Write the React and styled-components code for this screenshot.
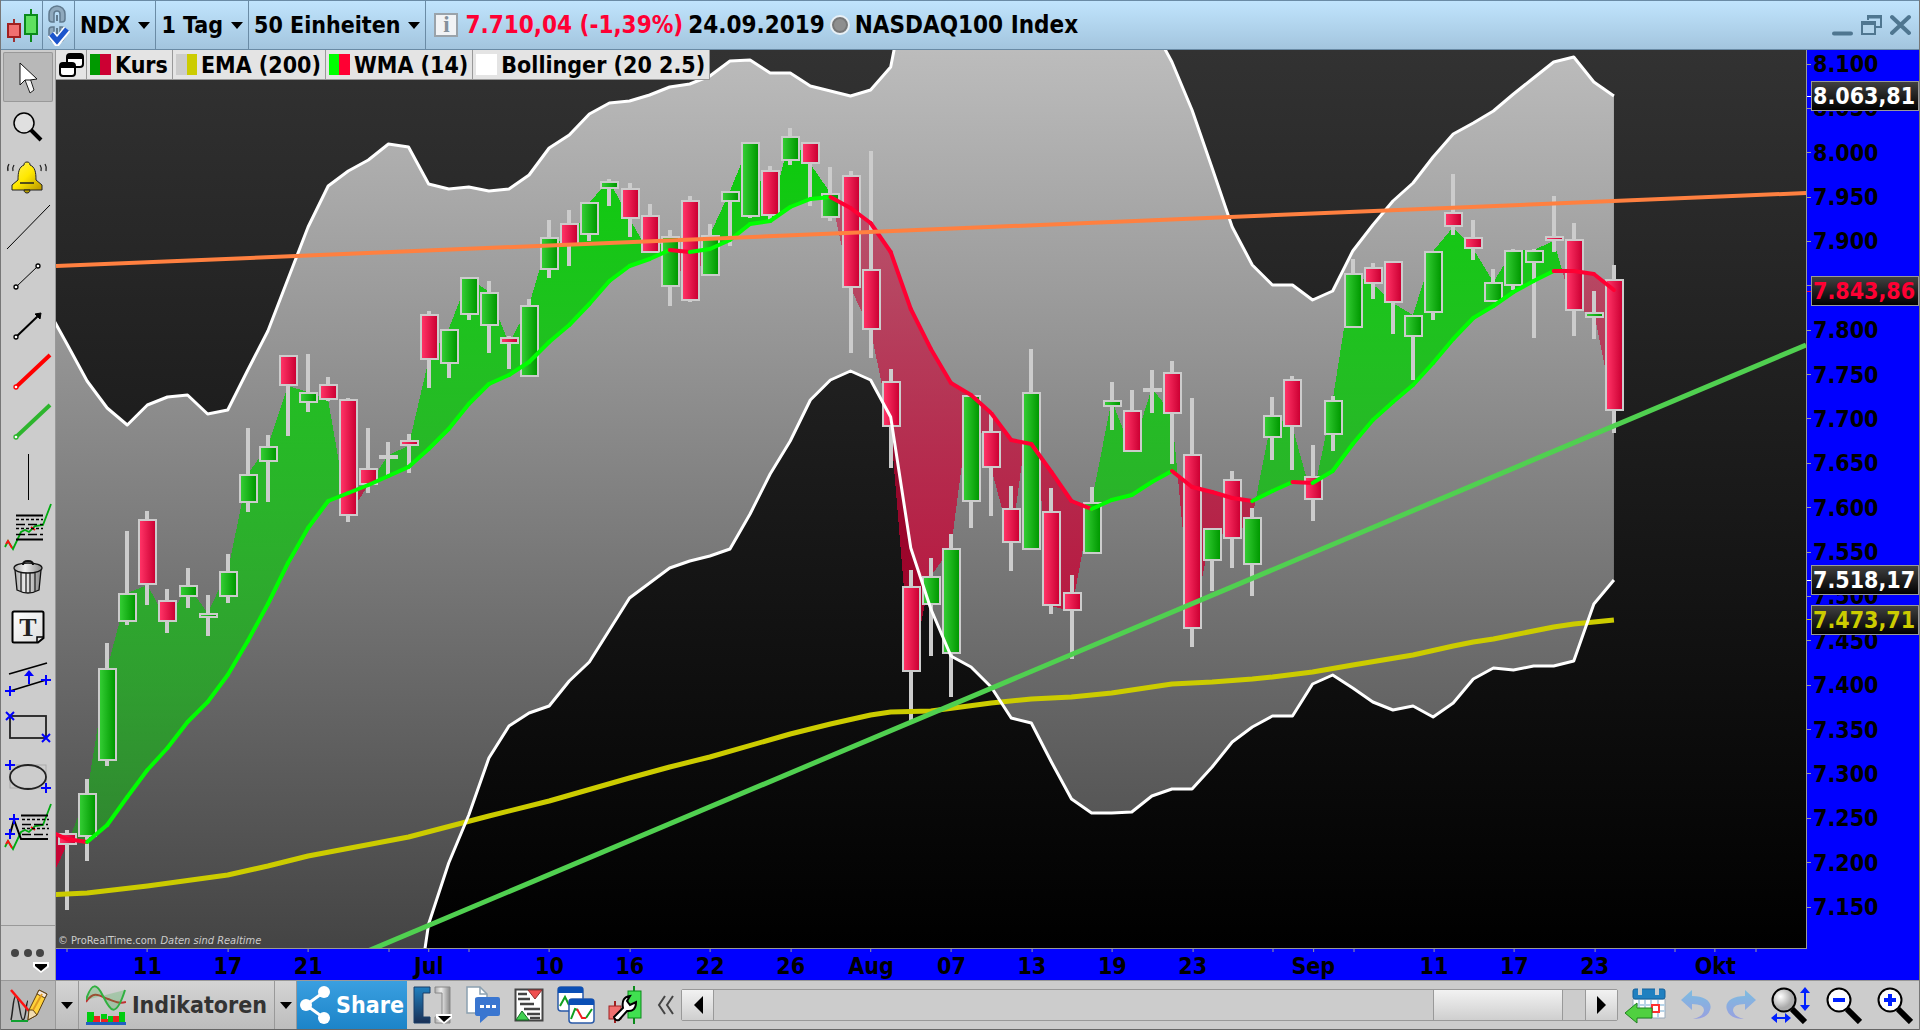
import React from "react";
import styled, { createGlobalStyle, css } from "styled-components";

const Global = createGlobalStyle`
  *, *::before, *::after { box-sizing: border-box; }
  html, body, #root { height: 100%; margin: 0; }
  body { overflow: hidden; background: #cccccc; }
  button, select { font: inherit; color: inherit; }
`;

/* ---------- market data, in plot units ---------- */

const STEP = 20.09;
const FIRST = 67;
const LEFT = 56;
const TOP = 50;
const WIDTH = 1750;
const HEIGHT = 898;
const xAt = (i) => FIRST + STEP * i;
const yAt = (price) => 64 + (8100 - price) * 0.8864;

// [high, body top, body bottom, low, rising]
const candles = [
  [830, 833, 845, 910, 0], [779, 793, 837, 861, 1], [643, 668, 761, 766, 1], [531, 593, 622, 625, 1],
  [511, 519, 585, 605, 0], [589, 600, 622, 633, 0], [568, 585, 597, 608, 1], [595, 613, 618, 636, 1],
  [554, 571, 597, 603, 1], [428, 474, 503, 512, 1], [435, 446, 462, 502, 1], [355, 355, 386, 436, 0],
  [354, 392, 403, 412, 1], [377, 384, 400, 401, 0], [398, 399, 516, 522, 0], [428, 468, 485, 493, 0],
  [442, 455, 459, 475, 1], [434, 440, 446, 473, 0], [311, 314, 360, 388, 0], [329, 329, 364, 378, 1],
  [277, 277, 315, 320, 1], [281, 292, 326, 353, 1], [336, 337, 344, 369, 0], [299, 305, 377, 377, 1],
  [220, 237, 270, 278, 1], [210, 223, 245, 266, 0], [202, 202, 235, 241, 1], [179, 181, 189, 206, 1],
  [183, 188, 219, 237, 0], [204, 215, 253, 253, 0], [230, 236, 287, 306, 1], [196, 200, 301, 302, 0],
  [224, 235, 276, 276, 1], [191, 191, 202, 246, 1], [142, 142, 217, 218, 1], [166, 170, 216, 220, 0],
  [128, 136, 161, 165, 1], [142, 142, 164, 206, 0], [167, 193, 218, 221, 1], [171, 175, 288, 353, 0],
  [151, 269, 330, 358, 0], [369, 381, 427, 468, 0], [570, 586, 672, 721, 0], [558, 576, 605, 656, 1],
  [534, 548, 654, 697, 1], [395, 395, 502, 528, 1], [411, 431, 468, 516, 0], [486, 508, 543, 571, 0],
  [349, 392, 550, 550, 1], [488, 511, 606, 614, 0], [575, 592, 611, 659, 0], [487, 502, 554, 554, 1],
  [382, 400, 407, 430, 1], [390, 410, 452, 452, 0], [370, 388, 392, 413, 1], [361, 372, 414, 464, 0],
  [398, 454, 629, 647, 0], [528, 528, 561, 591, 1], [471, 479, 539, 568, 0], [508, 517, 565, 596, 1],
  [397, 415, 438, 460, 1], [376, 379, 427, 470, 0], [445, 476, 500, 521, 0], [396, 400, 435, 451, 1],
  [259, 273, 328, 328, 1], [263, 267, 284, 299, 0], [261, 261, 303, 334, 0], [315, 315, 337, 380, 1],
  [251, 251, 313, 320, 1], [174, 212, 227, 235, 0], [220, 237, 249, 260, 0], [269, 282, 302, 302, 1],
  [249, 250, 286, 290, 1], [249, 250, 263, 338, 1], [196, 236, 241, 252, 0], [223, 239, 311, 336, 0],
  [291, 312, 318, 339, 1], [265, 279, 411, 433, 0],
];

const wma = [
  839, 842, 825, 797, 770, 748, 722, 702, 675, 641, 604, 563, 528, 501, 493, 485, 476, 467, 449, 429,
  404, 384, 375, 362, 342, 325, 304, 281, 266, 259, 250, 252, 249, 240, 224, 221, 207, 199, 197, 208,
  223, 252, 309, 349, 383, 395, 413, 440, 444, 472, 501, 509, 500, 495, 482, 471, 487, 492, 498, 501,
  491, 482, 483, 471, 444, 420, 402, 385, 363, 339, 318, 306, 292, 281, 271, 271, 274, 290,
];

const upperBand = [
  344, 381, 408, 425, 405, 397, 395, 414, 410, 370, 331, 279, 227, 186, 171, 160, 144, 147, 184, 189,
  187, 191, 189, 175, 148, 135, 114, 103, 101, 95, 87, 84, 76, 61, 60, 73, 73, 86, 91, 96,
  90, 67, -35, -60, -70, -80, -80, -80, -80, -80, -80, -80, -50, -20, 25, 62, 110, 168, 227, 265,
  285, 285, 300, 291, 251, 225, 201, 183, 157, 134, 123, 111, 94, 78, 62, 57, 82, 96,
];

const lowerBand = [
  924, 863, 815, 758, 726, 713, 706, 681, 662, 630, 598, 583, 568, 561, 556, 549, 514, 474, 441, 400,
  380, 371, 380, 417, 548, 609, 656, 667, 687, 718, 723, 762, 799, 813, 813, 812, 796, 789, 789, 767,
  742, 727, 716, 716, 684, 675, 688, 702, 710, 706, 717, 703, 679, 668, 670, 666, 666, 661, 604, 580,
];
const LOWER_START = 18;

const ema = [
  [-1, 895], [1, 893], [4, 886], [8, 875], [10, 866], [12, 856], [17, 837], [21, 816], [24, 801], [28, 778],
  [30, 767], [32, 757], [36, 734], [38, 724], [40, 715], [41, 712], [43, 711], [46, 703], [48, 699],
  [50, 697], [52, 693], [55, 684], [57, 682], [59, 679], [60, 677], [62, 672], [64, 665], [67, 655],
  [69, 646], [70, 642], [71, 639], [74, 627], [75, 624], [77, 620],
];

const closes = candles.map(([, top, bottom, , up]) => (up ? top : bottom));

/* Splits the area between close and average wherever the two lines cross. */
const cloud = (() => {
  const pts = [{ x: xAt(-1), c: 887, w: 830 }, ...closes.map((c, i) => ({ x: xAt(i), c, w: wma[i] }))];
  const up = [];
  const down = [];
  for (let i = 1; i < pts.length; i++) {
    const a = pts[i - 1];
    const b = pts[i];
    const da = a.w - a.c;
    const db = b.w - b.c;
    if (da * db >= 0) {
      (da + db >= 0 ? up : down).push(`M${a.x} ${a.c}L${b.x} ${b.c}L${b.x} ${b.w}L${a.x} ${a.w}Z`);
    } else {
      const t = da / (da - db);
      const mx = a.x + (b.x - a.x) * t;
      const my = a.c + (b.c - a.c) * t;
      (da > 0 ? up : down).push(`M${a.x} ${a.c}L${mx} ${my}L${a.x} ${a.w}Z`);
      (db > 0 ? up : down).push(`M${mx} ${my}L${b.x} ${b.c}L${b.x} ${b.w}Z`);
    }
  }
  return { up: up.join(""), down: down.join("") };
})();

const upperPts = [[47, 308], ...upperBand.map((y, i) => [xAt(i), y])];
const lowerPts = [[xAt(17), 1060], ...lowerBand.map((y, i) => [xAt(i + LOWER_START), y])];
const toPoints = (pts) => pts.map((p) => p.join(",")).join(" ");
const bandArea = toPoints([...upperPts, ...[...lowerPts].reverse(), [47, 1060]]);

const priceTicks = Array.from({ length: 20 }, (_, i) => 8100 - 50 * i);
const priceTags = [
  { price: 8063.81, color: "#ffffff" },
  { price: 7843.86, color: "#ff0033" },
  { price: 7518.17, color: "#ffffff" },
  { price: 7473.71, color: "#cccc00" },
];
const timeTicks = [
  [0], [4, "11"], [8, "17"], [12, "21"], [16], [18, "Jul"], [20], [24, "10"], [28, "16"], [32, "22"],
  [36, "26"], [40, "Aug"], [44, "07"], [48, "13"], [52, "19"], [56, "23"], [60], [62, "Sep"], [64],
  [68, "11"], [72, "17"], [76, "23"], [80], [82, "Okt"], [84],
];
const formatPrice = (v, digits) => {
  const [whole, cents] = v.toFixed(digits).split(".");
  const grouped = `${whole.slice(0, 1)}.${whole.slice(1)}`;
  return cents ? `${grouped},${cents}` : grouped;
};

/* ---------- styles ---------- */

const Window = styled.div`
  display: grid;
  grid-template-rows: 50px minmax(0, 1fr) 50px;
  height: 100vh;
  border-right: 1px solid #777777;
  border-left: 1px solid #777777;
  font: bold 23px/28px "DejaVu Sans Condensed", "Noto Sans", sans-serif;
  color: #000000;
`;

const Header = styled.header`
  display: flex;
  align-items: stretch;
  border-top: 1px solid #6a8ba5;
  border-bottom: 1px solid #6a8ba5;
  background: linear-gradient(#c0e4fd, #a3c5de);
  white-space: nowrap;
`;

const HeaderButton = styled.button`
  display: flex;
  align-items: center;
  justify-content: center;
  width: ${(p) => p.$width}px;
  padding: 0;
  border: 0;
  border-right: 1px solid #6a8ba5;
  background: none;
`;

const Picker = styled.label`
  display: flex;
  align-items: center;
  gap: 8px;
  padding: 0 5px;
  border-right: 1px solid #6a8ba5;
`;

const PickerSelect = styled.select`
  appearance: none;
  field-sizing: content;
  padding: 0;
  border: 0;
  background: none;
  font: inherit;
  outline: 0;
`;

const Quote = styled.div`
  display: flex;
  flex: 1;
  align-items: center;
  gap: 5px;
  padding-left: 8px;
  font-size: 24px;
`;

const Change = styled.span`
  color: #ff0033;
`;

const StatusDot = styled.span`
  flex: none;
  width: 20px;
  height: 20px;
  border: 2px solid #e8f0f6;
  border-radius: 50%;
  background: #8e8e8e;
  box-shadow: inset 0 0 0 2px #777777;
`;

const InfoButton = styled.button`
  width: 24px;
  height: 24px;
  margin-right: 2px;
  padding: 0;
  border: 2px solid #9aa3aa;
  background: #f1f3f5;
  color: #84919b;
  font: bold 23px/20px "Liberation Serif", serif;
`;

const WindowControls = styled.div`
  display: flex;
  align-items: center;
  gap: 8px;
  padding-right: 8px;
`;

const PlainButton = styled.button`
  display: flex;
  align-items: center;
  justify-content: center;
  padding: 0;
  border: 0;
  background: none;
`;

const Body = styled.div`
  display: grid;
  grid-template-columns: 55px minmax(0, 1fr);
  min-height: 0;
`;

const Sidebar = styled.nav`
  display: flex;
  flex-direction: column;
  padding-top: 2px;
  border-right: 1px solid #999999;
  background: #cccccc;
`;

const Tool = styled.button`
  display: flex;
  width: 50px;
  height: 50px;
  margin-left: 2px;
  padding: 0;
  border: 0;
  background: none;
  ${(p) =>
    p.$active &&
    css`
      background: #b8b8b8;
      box-shadow: inset 0 0 0 1px #999999;
      border-radius: 2px;
    `}
`;

const MoreTools = styled.button`
  display: flex;
  height: 55px;
  margin-top: auto;
  padding: 0 0 0 2px;
  border: 0;
  border-top: 1px solid #999999;
  background: none;
`;

const ChartGrid = styled.main`
  display: grid;
  grid-template-columns: minmax(0, 1fr) 112px;
  grid-template-rows: minmax(0, 1fr) 31px;
  background: #0000ff;
`;

const Plot = styled.section`
  position: relative;
  min-height: 0;
  border-right: 1px solid #999999;
  border-bottom: 1px solid #999999;
  overflow: hidden;
`;

const PlotSvg = styled.svg`
  display: block;
  width: 100%;
  height: 100%;
`;

const Legend = styled.div`
  position: absolute;
  top: 0;
  left: 0;
  display: flex;
  height: 30px;
  border-bottom: 1px solid #999999;
  background: #e4e4e4;
  line-height: 30px;
  white-space: nowrap;
`;

const LegendItem = styled.button`
  display: flex;
  align-items: center;
  gap: 4px;
  padding: 0 4px 0 3px;
  border: 0;
  border-right: 1px solid #999999;
  background: none;
`;

const LegendMenu = styled(LegendItem)`
  padding: 0 2px;
`;

const Swatch = styled.span`
  width: 21px;
  height: 21px;
  background: linear-gradient(90deg, ${(p) => p.$from} 50%, ${(p) => p.$to} 50%);
`;

const Copyright = styled.p`
  position: absolute;
  bottom: 0;
  left: 2px;
  display: flex;
  gap: 4px;
  margin: 0;
  color: #cccccc;
  font-size: 11px;
  line-height: 14px;
  font-weight: normal;
`;

const PriceAxis = styled.aside`
  position: relative;
  overflow: hidden;
`;

const PriceTick = styled.span`
  position: absolute;
  left: 0;
  display: flex;
  align-items: center;
  gap: 2px;
  height: 28px;
  transform: translateY(-50%);
  &::before {
    content: "";
    width: 4px;
    height: 1px;
    background: #999999;
  }
`;

const PriceTag = styled(PriceTick)`
  right: 0;
  gap: 0;
  color: ${(p) => p.$color};
  &::before {
    background: ${(p) => p.$color};
  }
`;

const TagBox = styled.span`
  flex: 1;
  height: 30px;
  padding-left: 1px;
  border: 1px solid #999999;
  background: linear-gradient(#404040, #000000);
`;

const TimeAxis = styled.aside`
  position: relative;
`;

const TimeTick = styled.span`
  position: absolute;
  top: 0;
  display: flex;
  flex-direction: column;
  align-items: center;
  transform: translateX(-50%);
  line-height: 34px;
  &::before {
    content: "";
    width: 1px;
    height: 3px;
    margin-bottom: -3px;
    background: #999999;
  }
`;

const Footer = styled.footer`
  display: flex;
  align-items: stretch;
  border-top: 1px solid #999999;
  border-bottom: 1px solid #666666;
  background: #cccccc;
  white-space: nowrap;
`;

const FooterButton = styled.button`
  display: flex;
  flex: none;
  align-items: center;
  justify-content: center;
  gap: 6px;
  width: ${(p) => p.$width}px;
  padding: 0;
  border: 0;
  border-right: 1px solid #999999;
  background: ${(p) => (p.$pressed ? "#b8b8b8" : "linear-gradient(#d4d4d4, #bdbdbd)")};
  color: #333333;
`;

const ShareButton = styled(FooterButton)`
  border-right: 0;
  background: linear-gradient(#3a9fe0, #1c84c8);
  color: #ffffff;
`;

const IconRow = styled.div`
  display: flex;
  align-items: center;
  gap: ${(p) => p.$gap}px;
  padding: 0 6px;
`;

const ScrollBar = styled.div`
  display: flex;
  flex: 1;
  align-self: center;
  height: 32px;
  border: 1px solid #999999;
  border-radius: 2px;
`;

const ScrollButton = styled.button`
  display: flex;
  align-items: center;
  justify-content: center;
  width: 31px;
  padding: 0;
  border: 0;
  background: linear-gradient(#f2f2f2, #cfcfcf);
`;

const ScrollTrack = styled.div`
  display: grid;
  flex: 1;
  grid-template-columns: 717fr 130fr 22fr;
  border: solid #999999;
  border-width: 0 1px;
`;

const ScrollThumb = styled.div`
  grid-column: 2;
  border: solid #999999;
  border-width: 0 1px;
  background: linear-gradient(#f2f2f2, #cfcfcf);
`;

/* ---------- icons ---------- */

const Icon = ({ w, h, children, ...rest }) => (
  <svg width={w} height={h} viewBox={`0 0 ${w} ${h}`} fill="none" aria-hidden="true" {...rest}>
    {children}
  </svg>
);

const Caret = () => (
  <Icon w={12} h={8}>
    <path d="M0 1H12L6 8Z" fill="#000" />
  </Icon>
);

const CandleIcon = () => (
  <Icon w={34} h={34}>
    <path d="M9 11V34" stroke="#a03030" strokeWidth="2" />
    <path d="M26 1V34" stroke="#0a8a1a" strokeWidth="2" />
    <rect x="3" y="16" width="12" height="13" fill="#f07070" stroke="#a02020" strokeWidth="2" />
    <rect x="20" y="7" width="12" height="19" fill="#5fe05f" stroke="#0a8a1a" strokeWidth="2" />
  </Icon>
);

const LinkIcon = () => (
  <Icon w={24} h={42}>
    <path d="M2 15V10a8 8 0 0 1 16 0v5q0 3-3 3h-2V10a3 3 0 0 0-6 0v8H5q-3 0-3-3Z" fill="#8fa9bd" stroke="#607a8e" strokeWidth="1.500" />
    <path d="M2 26V31a8 8 0 0 0 16 0v-5q0-3-3-3h-2V31a3 3 0 0 1-6 0v-8H5q-3 0-3 3Z" fill="#8fa9bd" stroke="#607a8e" strokeWidth="1.500" />
    <path d="M10 11v6M10 24v6" stroke="#607a8e" strokeWidth="2" />
    <path d="M4 30l6 8L20 25" stroke="#fff" strokeWidth="8" />
    <path d="M4 30l6 7L20 25" stroke="#1c55cc" strokeWidth="5" />
  </Icon>
);

const Plus = ({ x, y }) => <path d={`M${x - 5} ${y}h10M${x} ${y - 5}v10`} stroke="#0000ff" strokeWidth="2" />;
const Cross = ({ x, y }) => (
  <path d={`M${x - 4} ${y - 4}l8 8M${x + 4} ${y - 4}l-8 8`} stroke="#0000ff" strokeWidth="2" />
);
const Handle = ({ x, y, color = "#000" }) => <circle cx={x} cy={y} r="2" fill="#fff" stroke={color} strokeWidth="1.300" />;

const Squiggle = () => (
  <>
    <path d="M2 45L5 39L10 47L18 30L22 28L26 30L32 24L40 23L48 2" stroke="#00aa10" strokeWidth="1.800" />
    <path d="M3 42L5 39L9 46M28 25L32 28" stroke="#ff1010" strokeWidth="1.800" />
  </>
);

const toolIcons = [
  ["Zeiger", <>
    <path d="M22 28L27 26L31 38L27 41Z" fill="#f4f4f4" stroke="#222" />
    <path d="M17 11L17 33L22 28L27 28L34 27Z" fill="#fff" stroke="#111" />
  </>],
  ["Lupe", <>
    <path d="M28 28L38 38" stroke="#000" strokeWidth="4" />
    <circle cx="21" cy="21" r="10" fill="#e0e0e0" stroke="#000" strokeWidth="1.500" />
  </>],
  ["Alarm", <>
    <path d="M24 10c2 0 3 1 3 3c5 2 6 7 6 15l6 5v5H9v-5l6-5c0-8 1-13 6-15c0-2 1-3 3-3Z" fill="url(#bell)" stroke="#222" />
    <path d="M21 38c0 4 6 4 6 0Z" fill="#b89f00" stroke="#222" />
    <path d="M17 31h14M6 12q-2 3-1 7M11 13q-2 3-1 6M42 12q2 3 1 7M37 13q2 3 1 6" stroke="#222" strokeWidth="1.300" />
  </>],
  ["Gerade", <path d="M4 47L47 3" stroke="#000" />],
  ["Strecke", <><path d="M13 35L35 14" stroke="#000" /><Handle x={13} y={35} /><Handle x={35} y={14} /></>],
  ["Pfeil", <>
    <path d="M13 35L36 13" stroke="#000" strokeWidth="2" />
    <path d="M38 11L32 12L37 17Z" fill="#000" stroke="#000" />
    <Handle x={13} y={35} />
  </>],
  ["Rote Linie", <><path d="M13 35L47 3" stroke="#ff0000" strokeWidth="4" /><Handle x={13} y={35} color="#f00" /></>],
  ["Grüne Linie", <><path d="M13 35L47 3" stroke="#2db52d" strokeWidth="4" /><Handle x={13} y={35} color="#2db52d" /></>],
  ["Vertikale", <path d="M25.500 2V48" stroke="#000" />],
  ["Retracement", <>
    <Squiggle />
    <path d="M13 13.500H40M13 37.500H40" stroke="#000" strokeWidth="2" />
    <path d="M13 17.500h27M13 26.500h27" stroke="#000" strokeWidth="1.500" strokeDasharray="3 2" />
    <path d="M13 22.500h27M13 32.500h27" stroke="#000" strokeWidth="1.500" strokeDasharray="9 3" />
  </>],
  ["Löschen", <>
    <path d="M12 18L14 38Q25 44 36 38L38 18Z" fill="url(#metal)" stroke="#111" strokeWidth="1.300" />
    <path d="M18 21V40M23 21V41M27 21V41M32 21V40" stroke="#222" strokeWidth="1.300" />
    <ellipse cx="25" cy="16" rx="14" ry="5" fill="url(#metal)" stroke="#111" strokeWidth="1.300" />
    <path d="M20 13q0-4 5-4t5 4" stroke="#111" strokeWidth="2" />
  </>],
  ["Text", <>
    <path d="M11 9.500H39Q40.500 9.500 40.500 11V36L35 40.500H11Q9.500 40.500 9.500 39V11Q9.500 9.500 11 9.500Z" fill="url(#paper)" stroke="#000" strokeWidth="2" />
    <path d="M34 40V35H40" stroke="#000" strokeWidth="1.500" />
    <text x="25" y="34" textAnchor="middle" fill="#222" fontSize="26" fontWeight="bold" fontFamily="Liberation Serif, serif">T</text>
  </>],
  ["Kanal", <>
    <path d="M6 22L44 11M7 39L43 28" stroke="#000" strokeWidth="1.800" />
    <path d="M26 32V22" stroke="#0000ff" strokeWidth="2" />
    <path d="M21 24L26 18L31 24Z" fill="#0000ff" />
    <Plus x={7} y={39} /><Plus x={43} y={28} />
  </>],
  ["Rechteck", <>
    <rect x="7" y="14" width="36" height="22" stroke="#222" strokeWidth="1.800" />
    <Cross x={7} y={14} /><Cross x={43} y={36} />
  </>],
  ["Ellipse", <>
    <rect x="7" y="13" width="36" height="23" stroke="#aaaaaa" />
    <ellipse cx="25" cy="25" rx="18" ry="12" stroke="#222" strokeWidth="1.800" />
    <Plus x={7} y={13} /><Plus x={43} y={36} />
  </>],
  ["Projektion", <>
    <Squiggle />
    <path d="M7 32L11 18L18 37H45M18 13.500H45" stroke="#000" strokeWidth="2" />
    <path d="M19 17.500h27M19 26.500h27" stroke="#000" strokeWidth="1.500" strokeDasharray="3 2" />
    <path d="M19 22.500h26M19 32.500h26" stroke="#000" strokeWidth="1.500" strokeDasharray="9 3" />
    <Plus x={11} y={17} /><Plus x={7} y={32} />
  </>],
];

const Pencil = () => (
  <Icon w={40} h={36}>
    <path d="M3 33C5 25 5 9 8 9S12 33 15 33S18 14 20 14" stroke="#222" strokeWidth="1.500" />
    <path d="M3 3L21 24" stroke="#ff1010" strokeWidth="2.500" />
    <path d="M3 34H20" stroke="#10a030" strokeWidth="2" />
    <path d="M20 33L21 23L31 3L39 7L29 28Z" fill="#ffd23a" stroke="#5c3d10" />
    <path d="M20 33L21 23L25 23L29 28Z" fill="#f2dcb0" stroke="#5c3d10" />
    <path d="M31 3L39 7L37 11L29 7Z" fill="#f5e8dc" stroke="#5c3d10" />
    <path d="M25 23L34 7" stroke="#e09a20" strokeWidth="2" />
  </Icon>
);

const IndicatorIcon = () => (
  <Icon w={40} h={42}>
    <path d="M0 18C8 6 14 12 22 15S34 20 40 18" stroke="#c03030" strokeWidth="2" />
    <path d="M0 16C6 -3 11 0 17 12S29 38 39 6" fill="#30b040" fillOpacity="0.250" stroke="#30b040" strokeWidth="2" />
    <path d="M1 28H8V32H14V36H1ZM15 30H21V35H15ZM33 28H39V38H33ZM22 32H27V38H22Z" fill="#00cc10" />
    <path d="M8 32H14V38H8ZM27 32H33V38H27ZM15 35H22V38H15ZM1 36H8V38H1Z" fill="#ee2020" />
    <path d="M1 28H7V38H1Z" fill="#00cc10" />
    <path d="M0 39.500H40" stroke="#2060c0" strokeWidth="3" />
  </Icon>
);

const ShareIcon = () => (
  <Icon w={30} h={42}>
    <path d="M24 8L6 21L24 34" stroke="#fff" strokeWidth="3" />
    <circle cx="6" cy="21" r="6" fill="#fff" />
    <circle cx="24" cy="8" r="6" fill="#fff" />
    <circle cx="24" cy="34" r="6" fill="#fff" />
  </Icon>
);

const BracketsIcon = () => (
  <Icon w={40} h={38}>
    <path d="M1 1H17V7H10V31H17V37H1Z" fill="url(#blue)" stroke="#1b3f68" />
    <path d="M22 1H37V37H22V31H29V7H22Z" fill="url(#metal)" stroke="#888" />
    <path d="M23 28H39V32L31 38L23 32Z" fill="#fff" />
    <path d="M25 30H38L31 36Z" fill="#000" />
  </Icon>
);

const DocChatIcon = () => (
  <Icon w={35} h={38}>
    <path d="M1 1H14L21 8V27H1Z" fill="#fff" stroke="#8ba0b0" strokeWidth="1.500" />
    <path d="M14 1V8H21" stroke="#8ba0b0" strokeWidth="1.500" />
    <path d="M12 11H32Q34 11 34 13V28Q34 30 32 30H22L14 37L14 30H12Q9 30 9 28V13Q9 11 12 11Z" fill="#3a76d0" />
    <path d="M14 19h4v3h-4zM20 19h4v3h-4zM26 19h4v3h-4z" fill="#fff" />
  </Icon>
);

const ReportIcon = () => (
  <Icon w={30} h={34}>
    <rect x="1.500" y="1.500" width="27" height="31" fill="#fff" stroke="#444" strokeWidth="2" />
    <path d="M4 6H13M4 11H16M6 16H20M10 21H26M13 26H26M16 30H26" stroke="#444" strokeWidth="2.500" />
    <path d="M14 2H28L21 11Z" fill="#f05050" stroke="#903030" />
    <path d="M2 32H15L8 23Z" fill="#40d050" stroke="#107020" />
  </Icon>
);

const ChartsIcon = () => (
  <Icon w={38} h={38}>
    <rect x="1" y="1" width="25" height="24" rx="3" fill="#fff" stroke="#2a5aa8" strokeWidth="1.500" />
    <path d="M1 3Q1 1 3 1H24Q26 1 26 3V7H1Z" fill="#0a4fb5" />
    <path d="M3 20L8 11L12 19" stroke="#10a020" strokeWidth="2" />
    <rect x="12" y="13" width="25" height="24" rx="3" fill="#fff" stroke="#2a5aa8" strokeWidth="1.500" />
    <path d="M12 15Q12 13 14 13H35Q37 13 37 15V19H12Z" fill="#0a4fb5" />
    <path d="M14 33L18 23L21 24M29 32L35 23" stroke="#10a020" strokeWidth="2" />
    <path d="M20 23L25 32L29 32" stroke="#ee2020" strokeWidth="2" />
  </Icon>
);

const WrenchIcon = () => (
  <Icon w={36} h={38}>
    <path d="M7 15V37" stroke="#a02020" strokeWidth="2" />
    <rect x="1" y="20" width="12" height="13" fill="#f07070" stroke="#a02020" />
    <path d="M26 0V38" stroke="#0a8a1a" strokeWidth="2" />
    <rect x="20" y="5" width="13" height="27" fill="#40e050" stroke="#0a8a1a" />
    <path d="M6 31L15 22Q13 11 22 10L19 15L22 19L28 16Q28 26 19 25L11 34Q7 35 6 31Z" fill="#fff" stroke="#000" strokeWidth="2" />
  </Icon>
);

const CalendarIcon = () => (
  <Icon w={42} h={40}>
    <path d="M9 14H41V33H9Z" fill="#fff" stroke="#9ab" />
    <path d="M9 20H41M9 26H41M15 14V33M21 14V33M27 14V33M34 14V33" stroke="#b8d4e8" strokeWidth="2" />
    <rect x="9" y="4" width="32" height="10" rx="2" fill="#2080c0" stroke="#14609a" />
    <path d="M16 1V10M33 1V10" stroke="#c8ccd0" strokeWidth="4" />
    <rect x="28" y="20" width="7" height="7" fill="#fff" stroke="#ff3030" strokeWidth="2" />
    <path d="M1 28L13 18V23H28V33H13V38Z" fill="#50d040" stroke="#208020" />
  </Icon>
);

const UndoIcon = ({ flip }) => (
  <Icon w={30} h={30}>
    <path
      d="M0 10L11 0V6C24 6 32 12 29 20Q26 29 12 29Q23 26 23 20Q23 14 11 14V20Z"
      fill="url(#undo)"
      transform={flip ? "translate(30 0) scale(-1 1)" : undefined}
    />
  </Icon>
);

const LensIcon = ({ mode }) => (
  <Icon w={mode === "fit" ? 40 : 36} h={37}>
    <path d="M21 22L34 35" stroke="#000" strokeWidth="6" />
    <circle cx="13" cy="13" r="11.500" fill={mode === "fit" ? "url(#lens)" : "#fff"} stroke="#000" strokeWidth="2" />
    {mode !== "fit" && <path d={mode === "in" ? "M7 13H19M13 7V19" : "M7 13H19"} stroke="#0020ff" strokeWidth="4" />}
    {mode === "fit" && (
      <>
        <path d="M34 4V20M3 31H16" stroke="#0020ff" strokeWidth="2" />
        <path d="M29 6L34 0L39 6ZM29 18L34 24L39 18ZM6 26V36L0 31ZM14 26V36L20 31Z" fill="#0020ff" />
      </>
    )}
  </Icon>
);

const HiddenDefs = styled.svg`
  position: absolute;
`;

const SharedGradients = () => (
  <HiddenDefs width="0" height="0" aria-hidden="true">
    <defs>
      <linearGradient id="bell" x1="0" y1="0" x2="1" y2="1">
        <stop offset="0" stopColor="#fff45a" /><stop offset="0.500" stopColor="#ffe800" /><stop offset="1" stopColor="#b89400" />
      </linearGradient>
      <linearGradient id="metal" x1="0" x2="1"><stop offset="0" stopColor="#aaa" /><stop offset="0.400" stopColor="#eee" /><stop offset="1" stopColor="#888" /></linearGradient>
      <linearGradient id="paper" x1="0" x2="1" y2="1"><stop offset="0" stopColor="#fff" /><stop offset="1" stopColor="#ddd" /></linearGradient>
      <linearGradient id="blue" x2="0" y2="1"><stop offset="0" stopColor="#2080c0" /><stop offset="1" stopColor="#1a3055" /></linearGradient>
      <linearGradient id="undo" x2="0" y2="1"><stop offset="0" stopColor="#7cbce0" /><stop offset="1" stopColor="#98a0e0" /></linearGradient>
      <radialGradient id="lens" cx="0.350" cy="0.350"><stop offset="0" stopColor="#fff" /><stop offset="1" stopColor="#aaa" /></radialGradient>
    </defs>
  </HiddenDefs>
);

/* ---------- chart ---------- */

const Candle = ({ i, data: [high, top, bottom, low, up] }) => {
  const x = Math.round(xAt(i));
  const h = bottom - top;
  return (
    <g>
      <rect x={x - 2} y={high} width="4" height={low - high} fill="#cccccc" />
      <rect x={x - 9} y={top} width="19" height={h} fill="#cccccc" />
      {h > 4 && (
        <rect
          x={x - 7}
          y={top + 2}
          width="15"
          height={h - 4}
          fill={up ? "url(#candleUp)" : "url(#candleDown)"}
        />
      )}
    </g>
  );
};

const Chart = () => (
  <PlotSvg viewBox={`${LEFT} ${TOP} ${WIDTH} ${HEIGHT}`} preserveAspectRatio="none" role="img" aria-label="NASDAQ100 Index, Tageskerzen">
    <defs>
      <linearGradient id="plotBg" x2="0" y2="1"><stop offset="0" stopColor="#323232" /><stop offset="1" stopColor="#000" /></linearGradient>
      <linearGradient id="band" gradientUnits="userSpaceOnUse" x1="0" x2="0" y1="50" y2="948">
        <stop offset="0" stopColor="#bcbcbc" /><stop offset="1" stopColor="#444444" />
      </linearGradient>
      <linearGradient id="cloudUp" gradientUnits="userSpaceOnUse" x1="0" x2="0" y1="50" y2="948">
        <stop offset="0" stopColor="#00cc00" /><stop offset="1" stopColor="#00cc00" stopOpacity="0.350" />
      </linearGradient>
      <linearGradient id="cloudDown" gradientUnits="userSpaceOnUse" x1="0" x2="0" y1="50" y2="948">
        <stop offset="0" stopColor="#cc0033" stopOpacity="0.400" /><stop offset="1" stopColor="#cc0033" />
      </linearGradient>
      <linearGradient id="candleUp" x2="1"><stop offset="0" stopColor="#33cc33" /><stop offset="1" stopColor="#009900" /></linearGradient>
      <linearGradient id="candleDown" x2="1"><stop offset="0" stopColor="#ff3366" /><stop offset="1" stopColor="#cc0033" /></linearGradient>
    </defs>
    <rect x={LEFT} y={TOP} width={WIDTH} height={HEIGHT} fill="url(#plotBg)" />
    <polygon points={bandArea} fill="url(#band)" />
    <path d={cloud.up} fill="url(#cloudUp)" shapeRendering="crispEdges" />
    <path d={cloud.down} fill="url(#cloudDown)" shapeRendering="crispEdges" />
    {candles.map((c, i) => <Candle key={i} i={i} data={c} />)}
    <g fill="none" strokeLinejoin="round">
      <polyline points={toPoints(ema.map(([i, y]) => [xAt(i), y]))} stroke="#cccc00" strokeWidth="5" />
      {[830, ...wma].slice(0, -1).map((y, i) => (
        <line
          key={i}
          x1={xAt(i - 1)}
          y1={y}
          x2={xAt(i)}
          y2={wma[i]}
          stroke={wma[i] < y ? "#00ff00" : "#ff0033"}
          strokeWidth="4"
          strokeLinecap="round"
        />
      ))}
      <polyline points={toPoints(upperPts)} stroke="#ffffff" strokeWidth="3" />
      <polyline points={toPoints(lowerPts)} stroke="#ffffff" strokeWidth="3" />
      <path d="M56 266L1806 193" stroke="#ff8040" strokeWidth="4" />
      <path d="M356 956L1806 345" stroke="#50d050" strokeWidth="5" />
    </g>
  </PlotSvg>
);

const legend = [
  ["Kurs", "#009900", "#cc0033"],
  ["EMA (200)", "#cccccc", "#cccc00"],
  ["WMA (14)", "#00ff00", "#ff0033"],
  ["Bollinger (20 2.5)", "#ffffff", "#ffffff"],
];

const pickers = [
  ["Symbol", "NDX"],
  ["Zeiteinheit", "1 Tag"],
  ["Zeitraum", "50 Einheiten"],
];

const pct = (v, start, size) => `${((v - start) / size) * 100}%`;

export default function App() {
  return (
    <>
      <Global />
      <SharedGradients />
      <Window>
        <Header>
          <HeaderButton $width={42} aria-label="Charttyp"><CandleIcon /></HeaderButton>
          <HeaderButton $width={32} aria-label="Verknüpfung"><LinkIcon /></HeaderButton>
          {pickers.map(([name, value]) => (
            <Picker key={name}>
              <PickerSelect aria-label={name} defaultValue={value}>
                <option>{value}</option>
              </PickerSelect>
              <Caret />
            </Picker>
          ))}
          <Quote>
            <InfoButton aria-label="Info">i</InfoButton>
            <Change>7.710,04 (-1,39%)</Change>
            <span>24.09.2019</span>
            <StatusDot />
            <span>NASDAQ100 Index</span>
          </Quote>
          <WindowControls>
            <PlainButton aria-label="Minimieren">
              <Icon w={21} h={22}><path d="M2 19.500H19" stroke="#4f7690" strokeWidth="4" strokeLinecap="round" /></Icon>
            </PlainButton>
            <PlainButton aria-label="Wiederherstellen">
              <Icon w={21} h={22}>
                <path d="M7 6V2H20V13H15" stroke="#4f7690" strokeWidth="2" />
                <path d="M7 3H20" stroke="#4f7690" strokeWidth="3" />
                <rect x="1" y="8" width="13" height="12" fill="#b2d4eb" stroke="#4f7690" strokeWidth="2" />
                <path d="M1 9H14" stroke="#4f7690" strokeWidth="4" />
              </Icon>
            </PlainButton>
            <PlainButton aria-label="Schließen">
              <Icon w={21} h={22}><path d="M2 3L19 19M19 3L2 19" stroke="#4f7690" strokeWidth="4" strokeLinecap="round" /></Icon>
            </PlainButton>
          </WindowControls>
        </Header>

        <Body>
          <Sidebar aria-label="Zeichenwerkzeuge">
            {toolIcons.map(([name, drawing], i) => (
              <Tool key={name} $active={i === 0} aria-label={name}>
                <Icon w={50} h={50}>{drawing}</Icon>
              </Tool>
            ))}
            <MoreTools aria-label="Weitere Werkzeuge">
              <Icon w={50} h={54}>
                <circle cx="12" cy="27" r="4" fill="#444" />
                <circle cx="25" cy="27" r="4" fill="#444" />
                <circle cx="37" cy="27" r="4" fill="#444" />
                <path d="M30 36H46V41L38 47L30 41Z" fill="#fff" />
                <path d="M32 38H44V40L38 45L32 40Z" fill="#000" />
              </Icon>
            </MoreTools>
          </Sidebar>

          <ChartGrid>
            <Plot>
              <Chart />
              <Legend>
                <LegendMenu aria-label="Fenster">
                  <Icon w={26} h={26}>
                    <rect x="9" y="2" width="16" height="13" rx="3" fill="#fff" stroke="#000" strokeWidth="2" />
                    <path d="M9 7V4Q9 2 11 2H23Q25 2 25 4V7Z" fill="#000" />
                    <rect x="2" y="11" width="15" height="13" rx="3" fill="#fff" stroke="#000" strokeWidth="2" />
                    <path d="M2 16V13Q2 11 4 11H15Q17 11 17 13V16Z" fill="#000" />
                  </Icon>
                </LegendMenu>
                {legend.map(([name, from, to]) => (
                  <LegendItem key={name}>
                    <Swatch $from={from} $to={to} />
                    {name}
                  </LegendItem>
                ))}
              </Legend>
              <Copyright>
                <span>© ProRealTime.com</span>
                <em>Daten sind Realtime</em>
              </Copyright>
            </Plot>
            <PriceAxis aria-label="Preisachse">
              {priceTicks.map((p) => (
                <PriceTick key={p} style={{ top: pct(yAt(p), TOP, HEIGHT) }}>{formatPrice(p, 0)}</PriceTick>
              ))}
              {priceTags.map(({ price, color }) => (
                <PriceTag key={price} $color={color} style={{ top: pct(yAt(price), TOP, HEIGHT) }}>
                  <TagBox>{formatPrice(price, 2)}</TagBox>
                </PriceTag>
              ))}
            </PriceAxis>
            <TimeAxis aria-label="Zeitachse">
              {timeTicks.map(([i, label]) => (
                <TimeTick key={i} style={{ left: pct(xAt(i), LEFT, WIDTH) }}>{label}</TimeTick>
              ))}
            </TimeAxis>
          </ChartGrid>
        </Body>

        <Footer>
          <FooterButton $width={55} $pressed aria-label="Zeichnen"><Pencil /></FooterButton>
          <FooterButton $width={23} aria-label="Zeichenoptionen"><Caret /></FooterButton>
          <FooterButton $width={196}><IndicatorIcon />Indikatoren</FooterButton>
          <FooterButton $width={22} aria-label="Indikatorliste"><Caret /></FooterButton>
          <ShareButton $width={110}><ShareIcon />Share</ShareButton>
          <IconRow $gap={13}>
            <PlainButton aria-label="Orderfenster"><BracketsIcon /></PlainButton>
            <PlainButton aria-label="Notizen"><DocChatIcon /></PlainButton>
            <PlainButton aria-label="Orderliste"><ReportIcon /></PlainButton>
            <PlainButton aria-label="Charts"><ChartsIcon /></PlainButton>
            <PlainButton aria-label="Einstellungen"><WrenchIcon /></PlainButton>
            <PlainButton aria-label="Einklappen">
              <Icon w={18} h={20}><path d="M8 1L2 10L8 19M16 1L10 10L16 19" stroke="#444" strokeWidth="2" /></Icon>
            </PlainButton>
          </IconRow>
          <ScrollBar>
            <ScrollButton aria-label="Zurück"><Icon w={10} h={18}><path d="M10 0V18L1 9Z" fill="#000" /></Icon></ScrollButton>
            <ScrollTrack><ScrollThumb /></ScrollTrack>
            <ScrollButton aria-label="Vor"><Icon w={10} h={18}><path d="M0 0V18L9 9Z" fill="#000" /></Icon></ScrollButton>
          </ScrollBar>
          <IconRow $gap={15}>
            <PlainButton aria-label="Zum Datum"><CalendarIcon /></PlainButton>
            <PlainButton aria-label="Rückgängig"><UndoIcon /></PlainButton>
            <PlainButton aria-label="Wiederholen"><UndoIcon flip /></PlainButton>
            <PlainButton aria-label="Anpassen"><LensIcon mode="fit" /></PlainButton>
            <PlainButton aria-label="Verkleinern"><LensIcon mode="out" /></PlainButton>
            <PlainButton aria-label="Vergrößern"><LensIcon mode="in" /></PlainButton>
          </IconRow>
        </Footer>
      </Window>
    </>
  );
}
